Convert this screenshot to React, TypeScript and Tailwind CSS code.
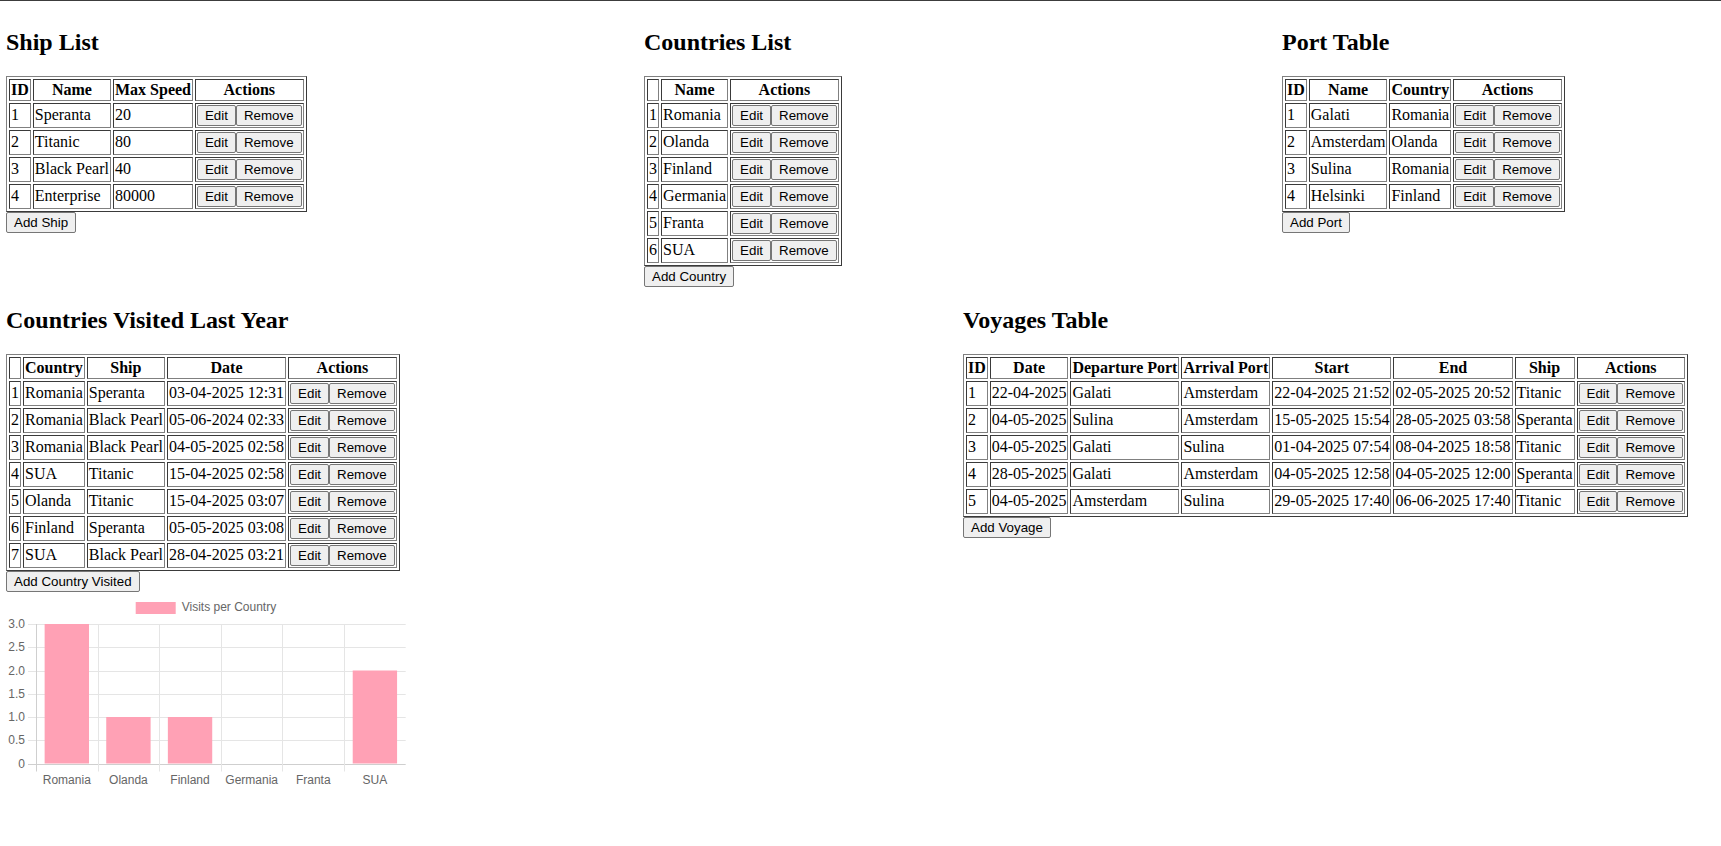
import React from "react";

const btn =
  "inline-block align-baseline bg-[#efefef] text-black border border-[#767676] rounded-[2px] px-[7px] py-[2px] text-[13.333px] leading-[normal] font-['Liberation_Sans',Arial,sans-serif] cursor-default";

const cellB =
  "border border-t-[#3a3a3a] border-l-[#3a3a3a] border-b-[#808080] border-r-[#808080] p-px";

type Cell = string;

function DataTable({
  headers,
  rows,
}: {
  headers: string[];
  rows: Cell[][];
}) {
  return (
    <table className="border-separate border-spacing-[2px] border border-t-[#808080] border-l-[#808080] border-b-[#3a3a3a] border-r-[#3a3a3a]">
      <thead>
        <tr>
          {headers.map((h, i) => (
            <th key={i} className={`${cellB} font-bold text-center`}>
              {h}
            </th>
          ))}
          <th className={`${cellB} font-bold text-center`}>Actions</th>
        </tr>
      </thead>
      <tbody>
        {rows.map((r, i) => (
          <tr key={i}>
            {r.map((c, j) => (
              <td key={j} className={`${cellB} text-left align-middle whitespace-nowrap`}>
                {c}
              </td>
            ))}
            <td className={`${cellB} whitespace-nowrap`}>
              <button className={btn}>Edit</button>
              <button className={btn}>Remove</button>
            </td>
          </tr>
        ))}
      </tbody>
    </table>
  );
}

function Heading({ children }: { children: React.ReactNode }) {
  return (
    <h2 className="text-[24px] font-bold leading-[normal] my-[19.92px]">{children}</h2>
  );
}

function Chart() {
  const left = 30;
  const right = 399.7;
  const top = 32;
  const bottom = 171.5;
  const cats = ["Romania", "Olanda", "Finland", "Germania", "Franta", "SUA"];
  const vals = [3, 1, 1, 0, 0, 2];
  const cw = (right - left) / 6;
  const unit = (bottom - top) / 3;
  const ticks = [0, 0.5, 1, 1.5, 2, 2.5, 3];
  const r5 = (v: number) => Math.round(v) + 0.5;
  return (
    <svg width={400} height={200} className="block">
      {ticks.map((t) => {
        const y = r5(bottom - t * unit);
        return (
          <g key={t}>
            <line x1={22} x2={right} y1={y} y2={y} stroke={t === 0 ? "#cfcfcf" : "#e5e5e5"} strokeWidth={1} />
            <text
              x={19}
              y={y}
              textAnchor="end"
              dominantBaseline="middle"
              fontSize={12}
              fill="#666"
              fontFamily="'Liberation Sans', Arial, sans-serif"
            >
              {t === 0 ? "0" : t.toFixed(1)}
            </text>
          </g>
        );
      })}
      {Array.from({ length: 7 }).map((_, i) => {
        const x = r5(left + i * cw);
        return (
          <line key={i} x1={x} x2={x} y1={top} y2={bottom + 8} stroke={i === 0 ? "#cfcfcf" : "#e5e5e5"} strokeWidth={1} />
        );
      })}
      {vals.map((v, i) => {
        const bw = cw * 0.72;
        const cx = left + cw * i + cw / 2;
        const h = v * unit;
        return v > 0 ? (
          <rect key={i} x={cx - bw / 2} y={bottom - h} width={bw} height={h} fill="#ffa1b5" />
        ) : null;
      })}
      {cats.map((c, i) => (
        <text
          key={c}
          x={left + cw * i + cw / 2}
          y={189}
          textAnchor="middle"
          dominantBaseline="middle"
          fontSize={12}
          fill="#666"
          fontFamily="'Liberation Sans', Arial, sans-serif"
        >
          {c}
        </text>
      ))}
      <rect x={129.7} y={10} width={40} height={12} fill="#ffa1b5" />
      <text
        x={175.7}
        y={16}
        dominantBaseline="middle"
        fontSize={12}
        fill="#666"
        fontFamily="'Liberation Sans', Arial, sans-serif"
      >
        Visits per Country
      </text>
    </svg>
  );
}

export default function App() {
  return (
    <div className="min-h-[846px] bg-white text-black border-t border-[#3c3c3c] font-['Liberation_Serif','Times_New_Roman',serif] text-[16px] leading-[normal]">
      <div className="px-[6px] pt-[8px]">
        <div className="grid grid-cols-3 gap-x-[205px] items-start">
          <div>
            <Heading>Ship List</Heading>
            <DataTable
              headers={["ID", "Name", "Max Speed"]}
              rows={[
                ["1", "Speranta", "20"],
                ["2", "Titanic", "80"],
                ["3", "Black Pearl", "40"],
                ["4", "Enterprise", "80000"],
              ]}
            />
            <button className={btn}>Add Ship</button>
          </div>
          <div>
            <Heading>Countries List</Heading>
            <DataTable
              headers={["", "Name"]}
              rows={[
                ["1", "Romania"],
                ["2", "Olanda"],
                ["3", "Finland"],
                ["4", "Germania"],
                ["5", "Franta"],
                ["6", "SUA"],
              ]}
            />
            <button className={btn}>Add Country</button>
          </div>
          <div>
            <Heading>Port Table</Heading>
            <DataTable
              headers={["ID", "Name", "Country"]}
              rows={[
                ["1", "Galati", "Romania"],
                ["2", "Amsterdam", "Olanda"],
                ["3", "Sulina", "Romania"],
                ["4", "Helsinki", "Finland"],
              ]}
            />
            <button className={btn}>Add Port</button>
          </div>
        </div>
        <div className="grid grid-cols-2 gap-x-[205px] items-start">
          <div>
            <Heading>Countries Visited Last Year</Heading>
            <DataTable
              headers={["", "Country", "Ship", "Date"]}
              rows={[
                ["1", "Romania", "Speranta", "03-04-2025 12:31"],
                ["2", "Romania", "Black Pearl", "05-06-2024 02:33"],
                ["3", "Romania", "Black Pearl", "04-05-2025 02:58"],
                ["4", "SUA", "Titanic", "15-04-2025 02:58"],
                ["5", "Olanda", "Titanic", "15-04-2025 03:07"],
                ["6", "Finland", "Speranta", "05-05-2025 03:08"],
                ["7", "SUA", "Black Pearl", "28-04-2025 03:21"],
              ]}
            />
            <button className={btn}>Add Country Visited</button>
            <Chart />
          </div>
          <div>
            <Heading>Voyages Table</Heading>
            <DataTable
              headers={["ID", "Date", "Departure Port", "Arrival Port", "Start", "End", "Ship"]}
              rows={[
                ["1", "22-04-2025", "Galati", "Amsterdam", "22-04-2025 21:52", "02-05-2025 20:52", "Titanic"],
                ["2", "04-05-2025", "Sulina", "Amsterdam", "15-05-2025 15:54", "28-05-2025 03:58", "Speranta"],
                ["3", "04-05-2025", "Galati", "Sulina", "01-04-2025 07:54", "08-04-2025 18:58", "Titanic"],
                ["4", "28-05-2025", "Galati", "Amsterdam", "04-05-2025 12:58", "04-05-2025 12:00", "Speranta"],
                ["5", "04-05-2025", "Amsterdam", "Sulina", "29-05-2025 17:40", "06-06-2025 17:40", "Titanic"],
              ]}
            />
            <button className={btn}>Add Voyage</button>
          </div>
        </div>
      </div>
    </div>
  );
}
